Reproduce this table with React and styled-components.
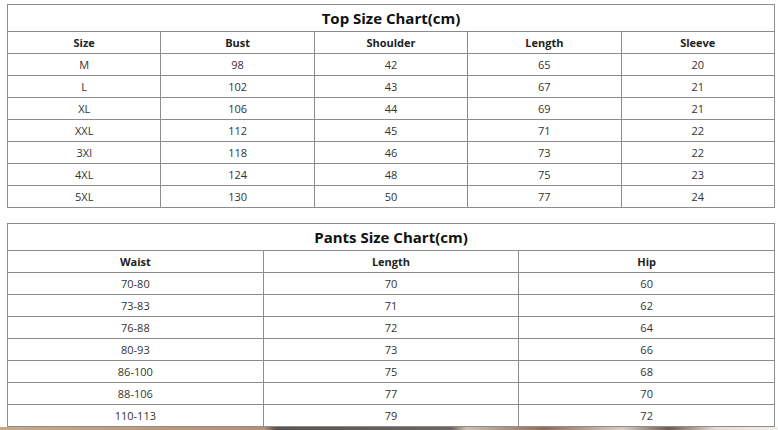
import React from "react";
import styled, { createGlobalStyle } from "styled-components";

const Global = createGlobalStyle`
  html, body { margin: 0; padding: 0; background: #fff; }
  body { font-family: "Open Sans", "Noto Sans", "Liberation Sans", sans-serif; }
`;

const Page = styled.div`
  width: 778px;
  height: 430px;
  overflow: hidden;
  padding: 4px 0 0 7px;
  box-sizing: border-box;
  display: flex;
  flex-direction: column;
  gap: 15px;
`;

const Table = styled.table`
  width: 768px;
  border-collapse: collapse;
  table-layout: fixed;
  border: 1px solid #8c8c8c;
`;

const TitleCell = styled.th`
  height: 26px;
  padding: 0;
  font-size: 15px;
  font-weight: 700;
  color: #111;
  text-align: center;
  border: 1px solid #8c8c8c;
`;

const HeadCell = styled.th`
  height: 21px;
  padding: 0;
  font-size: 11px;
  font-weight: 700;
  color: #222;
  text-align: center;
  border: 1px solid #8c8c8c;
`;

const Cell = styled.td`
  height: 21px;
  padding: 0;
  font-size: 11px;
  color: #333;
  text-align: center;
  border: 1px solid #8c8c8c;
`;

const PhotoStrip = styled.div`
  margin-left: -7px;
  margin-top: -15px;
  height: 4px;
  width: 778px;
  flex-shrink: 0;
  background: linear-gradient(
    90deg,
    #c9a88a 0%,
    #b58f73 34%,
    #5a5552 35.5%,
    #6d6662 58%,
    #cdbfb2 60%,
    #8f6c5a 70%,
    #d9cfc6 80%,
    #6f5b52 86%,
    #e6ddd4 92%,
    #f3efeb 100%
  );
`;

const topHead = ["Size", "Bust", "Shoulder", "Length", "Sleeve"];
const topRows = [
  ["M", "98", "42", "65", "20"],
  ["L", "102", "43", "67", "21"],
  ["XL", "106", "44", "69", "21"],
  ["XXL", "112", "45", "71", "22"],
  ["3Xl", "118", "46", "73", "22"],
  ["4XL", "124", "48", "75", "23"],
  ["5XL", "130", "50", "77", "24"],
];

const pantsHead = ["Waist", "Length", "Hip"];
const pantsRows = [
  ["70-80", "70", "60"],
  ["73-83", "71", "62"],
  ["76-88", "72", "64"],
  ["80-93", "73", "66"],
  ["86-100", "75", "68"],
  ["88-106", "77", "70"],
  ["110-113", "79", "72"],
];

function SizeTable({ title, head, rows }) {
  return (
    <Table>
      <thead>
        <tr>
          <TitleCell colSpan={head.length}>{title}</TitleCell>
        </tr>
        <tr>
          {head.map((h) => (
            <HeadCell key={h}>{h}</HeadCell>
          ))}
        </tr>
      </thead>
      <tbody>
        {rows.map((r, i) => (
          <tr key={i}>
            {r.map((c, j) => (
              <Cell key={j}>{c}</Cell>
            ))}
          </tr>
        ))}
      </tbody>
    </Table>
  );
}

export default function App() {
  return (
    <>
      <Global />
      <Page>
        <SizeTable title="Top Size Chart(cm)" head={topHead} rows={topRows} />
        <SizeTable title="Pants Size Chart(cm)" head={pantsHead} rows={pantsRows} />
        <PhotoStrip />
      </Page>
    </>
  );
}
